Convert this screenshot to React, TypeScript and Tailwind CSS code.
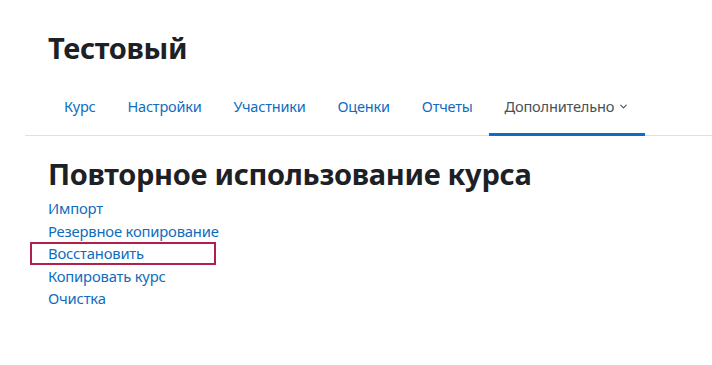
import { ChevronDown } from "lucide-react";

const tabs = ["Курс", "Настройки", "Участники", "Оценки", "Отчеты"];

const links = [
  "Импорт",
  "Резервное копирование",
  "Восстановить",
  "Копировать курс",
  "Очистка",
];

export default function App() {
  return (
    <div
      className="min-h-[365px] bg-white text-[#1d2125]"
      style={{ fontFamily: '"Noto Sans", "Open Sans", sans-serif' }}
    >
      <div className="pl-[25px]">
        {/* Page header */}
        <div className="pl-[23px] pt-[29px]">
          <h1 className="text-[29px] font-bold leading-[38px] tracking-[-0.3px]">Тестовый</h1>
        </div>

        {/* Secondary navigation */}
        <nav className="mt-[24px] flex border-b border-[#dee2e6] pl-[23px]">
          {tabs.map((t) => (
            <a
              key={t}
              className="px-4 pt-[4px] pb-[16px] text-[14.5px] leading-[22px] text-[#0f6cbf] border-b-[3px] border-transparent -mb-px tracking-[-0.2px]"
            >
              {t}
            </a>
          ))}
          <a className="flex items-center gap-[4px] px-4 pt-[4px] pb-[16px] text-[14.6px] leading-[22px] text-[#495057] border-b-[3px] border-[#0f6cbf] -mb-px tracking-[-0.2px]">
            Дополнительно
            <ChevronDown className="w-[11px] h-[11px]" strokeWidth={2.5} />
          </a>
        </nav>

        {/* Content */}
        <div className="pl-[23px] pt-[19px]">
          <h2 className="text-[29px] font-bold leading-[38px] tracking-[-0.3px]">
            Повторное использование курса
          </h2>
          <ul className="mt-[4px] flex flex-col">
            {links.map((l) => (
              <li key={l} className="text-[14.8px] leading-[22.5px] tracking-[-0.2px]">
                {l === "Восстановить" ? (
                  <span className="-ml-[18px] block w-[186px] border-2 border-[#b0204a] pl-[16px] leading-[18.5px]">
                    <a className="text-[#0f6cbf]">{l}</a>
                  </span>
                ) : (
                  <a className="text-[#0f6cbf]">{l}</a>
                )}
              </li>
            ))}
          </ul>
        </div>
      </div>
    </div>
  );
}
